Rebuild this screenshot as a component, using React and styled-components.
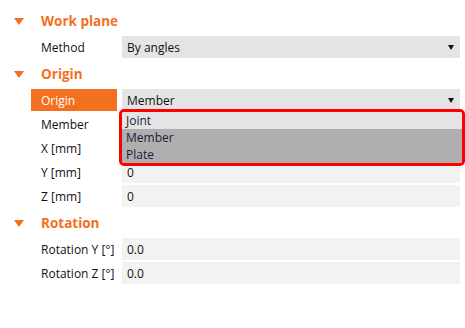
import React from "react";
import styled, { createGlobalStyle } from "styled-components";

const GlobalStyle = createGlobalStyle`
  html, body {
    margin: 0;
    padding: 0;
    background: #ffffff;
  }
  body {
    font-family: "Open Sans", "Noto Sans", sans-serif;
    color: #111111;
  }
`;

const ORANGE = "#f37021";

const sections = [
  {
    title: "Work plane",
    rows: [{ label: "Method", value: "By angles", select: true }],
  },
  {
    title: "Origin",
    rows: [
      { label: "Origin", value: "Member", select: true, active: true, dropdown: ["Joint", "Member", "Plate"] },
      { label: "Member", value: "" },
      { label: "X [mm]", value: "" },
      { label: "Y [mm]", value: "0" },
      { label: "Z [mm]", value: "0" },
    ],
  },
  {
    title: "Rotation",
    rows: [
      { label: "Rotation Y [°]", value: "0.0" },
      { label: "Rotation Z [°]", value: "0.0" },
    ],
  },
];

const App = () => {
  return (
    <>
      <GlobalStyle />
      <Panel>
        {sections.map((section) => (
          <Section key={section.title}>
            <Header>
              <Caret />
              <HeaderTitle>{section.title}</HeaderTitle>
            </Header>
            {section.rows.map((row) => (
              <Row key={row.label}>
                <Label $active={row.active}>{row.label}</Label>
                <Field $select={row.select}>
                  <FieldText>{row.value}</FieldText>
                  {row.select && <Arrow />}
                  {row.dropdown && (
                    <Highlight>
                      {row.dropdown.map((item, i) => (
                        <Option key={item} $dark={i > 0}>
                          {item}
                        </Option>
                      ))}
                    </Highlight>
                  )}
                </Field>
              </Row>
            ))}
          </Section>
        ))}
      </Panel>
    </>
  );
};

export default App;

const Panel = styled.div`
  width: 465px;
  height: 328px;
  padding-top: 7px;
  box-sizing: border-box;
  display: flex;
  flex-direction: column;
  gap: 2px;
`;

const Section = styled.div`
  display: flex;
  flex-direction: column;
  gap: 2px;
`;

const Header = styled.div`
  height: 27px;
  display: flex;
  align-items: center;
  padding-left: 14px;
`;

const Caret = styled.span`
  width: 0;
  height: 0;
  border-left: 5px solid transparent;
  border-right: 5px solid transparent;
  border-top: 7px solid ${ORANGE};
  margin-right: 17px;
  margin-top: 1px;
`;

const HeaderTitle = styled.span`
  color: ${ORANGE};
  font-weight: 700;
  font-size: 13.5px;
`;

const Row = styled.div`
  height: 22px;
  display: flex;
  padding-left: 31px;
  padding-right: 5px;
`;

const Label = styled.div`
  width: 86px;
  margin-right: 5px;
  box-sizing: border-box;
  padding-left: 10px;
  display: flex;
  align-items: center;
  font-size: 12px;
  white-space: nowrap;
  background: ${(p) => (p.$active ? ORANGE : "transparent")};
  color: ${(p) => (p.$active ? "#ffffff" : "#111111")};
`;

const Field = styled.div`
  position: relative;
  flex: 1;
  display: flex;
  align-items: center;
  padding: 0 6px 0 5px;
  background: ${(p) => (p.$select ? "#e4e4e4" : "#f2f2f2")};
`;

const FieldText = styled.span`
  flex: 1;
  font-size: 12px;
`;

const Arrow = styled.span`
  width: 0;
  height: 0;
  border-left: 3px solid transparent;
  border-right: 3px solid transparent;
  border-top: 5px solid #111111;
`;

const Highlight = styled.div`
  position: absolute;
  z-index: 2;
  top: 20px;
  left: -3px;
  right: -5px;
  border: 3px solid #ff0000;
  border-radius: 5px;
  overflow: hidden;
  display: flex;
  flex-direction: column;
`;

const Option = styled.div`
  height: 17px;
  display: flex;
  align-items: center;
  padding-left: 4px;
  font-size: 12px;
  color: #1c1c3a;
  background: ${(p) => (p.$dark ? "#afafaf" : "#e4e4e4")};
`;
